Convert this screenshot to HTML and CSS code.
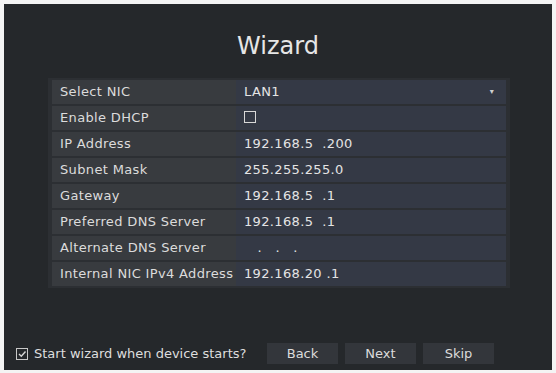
FILE: index.html
```html
<!DOCTYPE html>
<html>
<head>
<meta charset="utf-8">
<link rel="stylesheet" href="styles.css">
</head>
<body>
<div class="screen">
  <h1 class="title">Wizard</h1>
  <div class="table">
    <div class="row"><div class="label">Select NIC</div><div class="value select"><span>LAN1</span><span class="arrow">▾</span></div></div>
    <div class="row"><div class="label">Enable DHCP</div><div class="value"><span class="box"></span></div></div>
    <div class="row"><div class="label">IP Address</div><div class="value">192.168.5  .200</div></div>
    <div class="row"><div class="label">Subnet Mask</div><div class="value">255.255.255.0</div></div>
    <div class="row"><div class="label">Gateway</div><div class="value">192.168.5  .1</div></div>
    <div class="row"><div class="label">Preferred DNS Server</div><div class="value">192.168.5  .1</div></div>
    <div class="row"><div class="label">Alternate DNS Server</div><div class="value">   .   .   .</div></div>
    <div class="row"><div class="label">Internal NIC IPv4 Address</div><div class="value">192.168.20 .1</div></div>
  </div>
  <div class="footer">
    <label class="start"><span class="check"><svg width="10" height="10" viewBox="0 0 10 10"><path d="M2 5 L4.3 7.3 L8.5 2.5" fill="none" stroke="#d8d8d8" stroke-width="1.4"/></svg></span>Start wizard when device starts?</label>
    <div class="buttons">
      <div class="btn">Back</div>
      <div class="btn">Next</div>
      <div class="btn">Skip</div>
    </div>
  </div>
</div>
</body>
</html>
```
FILE: styles.css
```css
html, body {
  margin: 0;
  padding: 0;
  background: #f4f4f4;
}
body {
  padding: 4px 4px 3px 4px;
  width: 556px;
  height: 373px;
  box-sizing: border-box;
  font-family: "DejaVu Sans", sans-serif;
}
.screen {
  background: #25282b;
  height: 100%;
  display: flex;
  flex-direction: column;
  color: #e2e2e2;
}
.title {
  margin: 26px 0 0 0;
  text-align: center;
  font-weight: normal;
  font-size: 24px;
  line-height: 32px;
  color: #e6e6e6;
}
.table {
  margin: 16px 42px 0 44px;
  background: #2c2f33;
  padding: 2px 4px;
  display: flex;
  flex-direction: column;
  gap: 2px;
}
.row {
  display: grid;
  grid-template-columns: 184px 1fr;
  height: 24px;
  font-size: 13px;
  letter-spacing: 0.35px;
  line-height: 24px;
}
.label {
  background: #383b3f;
  padding-left: 8px;
  color: #dcdcdc;
  white-space: nowrap;
}
.value {
  background: #343945;
  padding-left: 8px;
  white-space: pre;
  color: #e4e4e4;
}
.select {
  display: flex;
  justify-content: space-between;
  padding-right: 12px;
}
.arrow {
  font-size: 8px;
  color: #cfcfcf;
}
.box {
  display: inline-block;
  width: 10px;
  height: 10px;
  border: 1px solid #d8d8d8;
  vertical-align: -1px;
}
.footer {
  margin-top: auto;
  margin-bottom: 6px;
  display: flex;
  align-items: center;
  padding-left: 12px;
}
.start {
  display: flex;
  align-items: center;
  gap: 6px;
  font-size: 13px;
  color: #dedede;
  width: 251px;
}
.check {
  width: 10px;
  height: 10px;
  border: 1px solid #c8c8c8;
  display: flex;
  align-items: center;
  justify-content: center;
  flex: none;
}
.buttons {
  display: flex;
  gap: 7px;
}
.btn {
  width: 71px;
  height: 21px;
  line-height: 21px;
  text-align: center;
  font-size: 13px;
  background: #33363b;
  color: #dcdcdc;
}
```
